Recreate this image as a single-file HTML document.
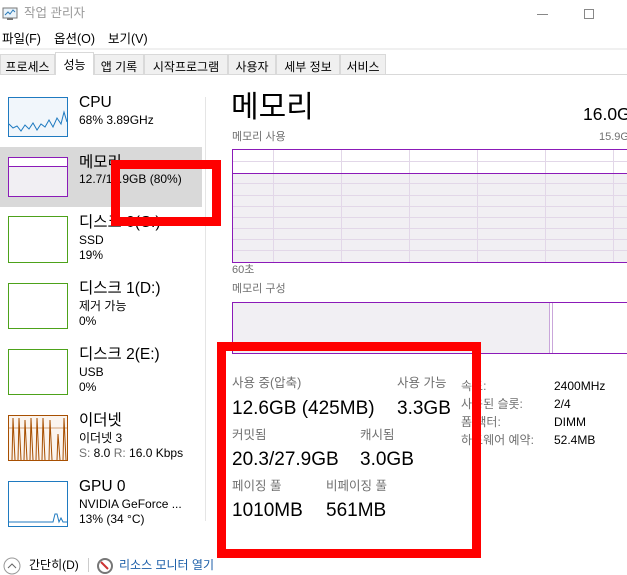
<!DOCTYPE html>
<html><head><meta charset="utf-8"><style>
*{margin:0;padding:0;box-sizing:border-box}
body{width:627px;height:572px;overflow:hidden;background:#fff;position:relative;font-family:"Liberation Sans","Noto Sans CJK KR",sans-serif;color:#000}
.a{position:absolute;white-space:nowrap;line-height:1}
.g{color:#707070}
.th{position:absolute;left:8px;width:60px;border:1px solid}
.tab{position:absolute;top:54px;height:20px;border:1px solid #d9d9d9;border-bottom:none;background:#f0f0f0;font-size:12px;padding:3px 0 0 0;text-align:center}
.vl{position:absolute;top:0;bottom:0;width:1px;background:#e2d7e8}
.hl{position:absolute;left:0;right:0;height:1px;background:#e2d7e8}
.red{position:absolute;border:9px solid #f00}
.h{font-size:15.5px}
.s{font-size:12px}
</style></head><body>
<svg class="a" style="left:2px;top:7px" width="16" height="14"><rect x="1" y="1" width="14" height="10" fill="#eaf3fa" stroke="#777"/><polyline points="3,8 6,5 8,7 11,3 13,5" fill="none" stroke="#2a7ab8"/><rect x="5" y="11" width="6" height="2" fill="#777"/></svg>
<div class="a g" style="left:24px;top:7px;font-size:12.5px;color:#999">작업 관리자</div>
<div class="a" style="left:537px;top:14px;width:11px;height:1px;background:#888"></div>
<div class="a" style="left:584px;top:9px;width:10px;height:10px;border:1px solid #888"></div>
<div class="a" style="left:2px;top:33px;font-size:12.5px">파일(F)</div>
<div class="a" style="left:54px;top:33px;font-size:12.5px">옵션(O)</div>
<div class="a" style="left:108px;top:33px;font-size:12.5px">보기(V)</div>
<div class="a" style="left:0;top:48px;width:627px;height:2px;background:#f0f0f0"></div>
<div class="a" style="left:0;top:74px;width:627px;height:1px;background:#d9d9d9"></div>
<div class="tab" style="left:0;width:55px">프로세스</div>
<div class="tab" style="left:55px;top:52px;height:23px;width:39px;background:#fff">성능</div>
<div class="tab" style="left:94px;width:50px">앱 기록</div>
<div class="tab" style="left:144px;width:84px">시작프로그램</div>
<div class="tab" style="left:228px;width:48px">사용자</div>
<div class="tab" style="left:276px;width:64px">세부 정보</div>
<div class="tab" style="left:340px;width:46px">서비스</div>
<div class="a" style="left:205px;top:97px;width:1px;height:424px;background:#e5e5e5"></div>
<div class="a" style="left:0;top:147px;width:202px;height:60px;background:#d9d9d9"></div>
<div class="th" style="top:97px;height:40px;border-color:#1f7ac0;background:#f1f6fb"><svg width="58" height="38"><polyline points="0,26 4,30 8,28 12,33 16,27 20,31 24,25 28,32 32,26 36,29 40,22 44,29 48,20 52,26 55,14 58,24" fill="none" stroke="#1f7ac0"/></svg></div>
<div class="a h" style="left:79px;top:95px">CPU</div>
<div class="a s" style="left:79px;top:114px">68% 3.89GHz</div>
<div class="th" style="top:157px;height:40px;border-color:#8b1ab8;background:#f1eff3"><div style="height:9px;background:#fff;border-bottom:1px solid #8b1ab8"></div></div>
<div class="a h" style="left:79px;top:155px">메모리</div>
<div class="a s" style="left:79px;top:173px">12.7/15.9GB (80%)</div>
<div class="th" style="top:216px;height:47px;border-color:#4da21a"></div>
<div class="a h" style="left:79px;top:215px">디스크 0(C:)</div>
<div class="a s" style="left:79px;top:234px">SSD</div>
<div class="a s" style="left:79px;top:249px">19%</div>
<div class="th" style="top:283px;height:46px;border-color:#4da21a"></div>
<div class="a h" style="left:79px;top:281px">디스크 1(D:)</div>
<div class="a s" style="left:79px;top:300px">제거 가능</div>
<div class="a s" style="left:79px;top:315px">0%</div>
<div class="th" style="top:349px;height:46px;border-color:#4da21a"></div>
<div class="a h" style="left:79px;top:347px">디스크 2(E:)</div>
<div class="a s" style="left:79px;top:366px">USB</div>
<div class="a s" style="left:79px;top:381px">0%</div>
<div class="th" style="top:415px;height:46px;border-color:#a74f01;background:#fbf4ee"><svg width="58" height="44"><g stroke="#a74f01" fill="none"><line x1="0" y1="12" x2="58" y2="12" stroke-width=".6"/><path d="M3 44L4 2L6 44M9 44L10 2L12 44M15 44L16 4L18 44M21 44L22 2L24 44M27 44L28 2L30 44M33 44L34 2L36 44M40 44L41 4L43 44M48 44L49 18L51 44M54 44L55 2L57 44"/></g></svg></div>
<div class="a h" style="left:79px;top:413px">이더넷</div>
<div class="a s" style="left:79px;top:432px">이더넷 3</div>
<div class="a s" style="left:79px;top:447px"><span class="g">S:</span> 8.0 <span class="g">R:</span> 16.0 Kbps</div>
<div class="th" style="top:481px;height:46px;border-color:#1f7ac0"><svg width="58" height="44"><polyline points="0,40 44,40 46,32 48,32 50,40 52,36 54,40 58,40" fill="none" stroke="#1f7ac0"/></svg></div>
<div class="a h" style="left:79px;top:479px">GPU 0</div>
<div class="a s" style="left:79px;top:498px">NVIDIA GeForce ...</div>
<div class="a s" style="left:79px;top:513px">13% (34 °C)</div>
<svg class="a" style="left:3px;top:557px" width="18" height="18"><circle cx="9" cy="9" r="8" fill="none" stroke="#999"/><polyline points="5,11 9,7 13,11" fill="none" stroke="#666"/></svg>
<div class="a" style="left:29px;top:559px;font-size:12px">간단히(D)</div>
<div class="a" style="left:88px;top:558px;width:1px;height:14px;background:#ccc"></div>
<svg class="a" style="left:96px;top:557px" width="18" height="18"><circle cx="9" cy="9" r="7" fill="#fff" stroke="#777" stroke-width="2"/><line x1="5" y1="5" x2="12" y2="12" stroke="#c33" stroke-width="2"/></svg>
<div class="a" style="left:119px;top:559px;font-size:12px;color:#1b5ea8">리소스 모니터 열기</div>
<div class="a" style="left:231px;top:93px;font-size:30px">메모리</div>
<div class="a" style="left:583px;top:106px;font-size:17.5px">16.0GB</div>
<div class="a g" style="left:232px;top:132px;font-size:11px">메모리 사용</div>
<div class="a g" style="left:599px;top:132px;font-size:11px">15.9GB</div>
<div class="a" style="left:232px;top:149px;width:400px;height:114px;border:1px solid #8b1ab8;background:#f1eff3;overflow:hidden">
<div style="position:absolute;left:0;right:0;top:0;height:23px;background:#fff"></div>
<div class="hl" style="top:11px"></div><div class="hl" style="top:33px"></div><div class="hl" style="top:45px"></div><div class="hl" style="top:56px"></div><div class="hl" style="top:67px"></div><div class="hl" style="top:78px"></div><div class="hl" style="top:89px"></div><div class="hl" style="top:100px"></div>
<div class="vl" style="left:40px"></div><div class="vl" style="left:108px"></div><div class="vl" style="left:176px"></div><div class="vl" style="left:244px"></div><div class="vl" style="left:312px"></div><div class="vl" style="left:380px"></div>
<div class="hl" style="top:23px;background:#8b1ab8"></div>
</div>
<div class="a g" style="left:232px;top:265px;font-size:11px">60초</div>
<div class="a g" style="left:232px;top:284px;font-size:11px">메모리 구성</div>
<div class="a" style="left:232px;top:302px;width:400px;height:52px;border:1px solid #8b1ab8;background:#fff">
<div style="position:absolute;left:0;top:0;width:317px;height:50px;background:#f1eff3;border-right:1px solid #c9a6da"></div>
<div style="position:absolute;left:319px;top:0;width:1px;height:50px;background:#c9a6da"></div>
</div>
<div class="a g" style="left:232px;top:377px;font-size:12.5px">사용 중(압축)</div>
<div class="a" style="left:232px;top:399px;font-size:19px">12.6GB (425MB)</div>
<div class="a g" style="left:397px;top:377px;font-size:12.5px">사용 가능</div>
<div class="a" style="left:397px;top:399px;font-size:19px">3.3GB</div>
<div class="a g" style="left:232px;top:429px;font-size:12.5px">커밋됨</div>
<div class="a" style="left:232px;top:450px;font-size:19px">20.3/27.9GB</div>
<div class="a g" style="left:360px;top:429px;font-size:12.5px">캐시됨</div>
<div class="a" style="left:360px;top:450px;font-size:19px">3.0GB</div>
<div class="a g" style="left:232px;top:480px;font-size:12.5px">페이징 풀</div>
<div class="a" style="left:232px;top:501px;font-size:19px">1010MB</div>
<div class="a g" style="left:326px;top:480px;font-size:12.5px">비페이징 풀</div>
<div class="a" style="left:326px;top:501px;font-size:19px">561MB</div>
<div class="a g" style="left:461px;top:377px;font-size:12px;line-height:18px">속도:<br>사용된 슬롯:<br>폼 팩터:<br>하드웨어 예약:</div>
<div class="a" style="left:554px;top:377px;font-size:12px;line-height:18px">2400MHz<br>2/4<br>DIMM<br>52.4MB</div>
<div class="red" style="left:111px;top:160px;width:110px;height:66px"></div>
<div class="red" style="left:217px;top:342px;width:264px;height:216px"></div>
</body></html>
